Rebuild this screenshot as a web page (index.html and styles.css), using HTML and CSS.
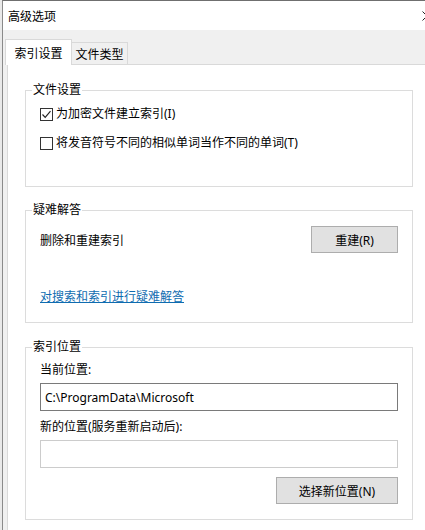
FILE: index.html
```html
<!DOCTYPE html>
<html lang="zh-CN">
<head>
    <meta charset="UTF-8">
    <meta name="viewport" content="width=device-width, initial-scale=1.0">
    <title>高级选项</title>
    <link rel="stylesheet" href="styles.css">
</head>
<body>
    <div class="window">
        <div class="titlebar">
            <span class="title">高级选项</span>
            <svg class="close" width="10" height="10" viewBox="0 0 10 10">
                <path d="M0.5 0.5 L9.5 9.5 M9.5 0.5 L0.5 9.5" stroke="#222" stroke-width="1" fill="none"/>
            </svg>
        </div>

        <div class="corpo">
            <div class="tabs">
                <div class="tab ativo">索引设置</div>
                <div class="tab">文件类型</div>
            </div>

            <div class="pagina">
                <!-- Grupo 1 -->
                <div class="grupo g1">
                    <div class="grupo-titulo">文件设置</div>
                    <label class="check c1">
                        <span class="caixa">
                            <svg width="11" height="11" viewBox="0 0 11 11">
                                <path d="M1.5 5.5 L4.2 8.3 L9.5 2.2" stroke="#222" stroke-width="1.2" fill="none"/>
                            </svg>
                        </span>
                        为加密文件建立索引(I)
                    </label>
                    <label class="check c2">
                        <span class="caixa"></span>
                        将发音符号不同的相似单词当作不同的单词(T)
                    </label>
                </div>

                <!-- Grupo 2 -->
                <div class="grupo g2">
                    <div class="grupo-titulo">疑难解答</div>
                    <div class="linha">
                        <span>删除和重建索引</span>
                        <button class="botao botao-rebuild">重建(R)</button>
                    </div>
                    <a href="#" class="link">对搜索和索引进行疑难解答</a>
                </div>

                <!-- Grupo 3 -->
                <div class="grupo g3">
                    <div class="grupo-titulo">索引位置</div>
                    <div class="rotulo r1">当前位置:</div>
                    <div class="campo">C:\ProgramData\Microsoft</div>
                    <div class="rotulo r2">新的位置(服务重新启动后):</div>
                    <div class="campo vazio"></div>
                    <div class="acoes">
                        <button class="botao botao-novo">选择新位置(N)</button>
                    </div>
                </div>
            </div>
        </div>
    </div>
</body>
</html>
```

FILE: styles.css
```css
html, body {
    margin: 0;
    padding: 0;
}

body {
    background-color: #e9e9e9;
    font-family: "Noto Sans", "Noto Sans CJK SC", sans-serif;
    font-size: 12px;
    color: #000;
}

.window {
    margin-left: 2px;
    height: 530px;
    box-sizing: border-box;
    border-left: 1px solid #8a8a8a;
    border-top: 1px solid #6f6f6f;
    background-color: #f0f0f0;
    overflow: hidden;
}

.titlebar {
    height: 29px;
    background-color: #fff;
    display: flex;
    align-items: center;
    padding-left: 5px;
    overflow: hidden;
}

.close {
    margin-left: auto;
    margin-right: -7px;
    flex-shrink: 0;
}

.corpo {
    padding-top: 9px;
}

/* abas */
.tabs {
    display: flex;
    align-items: flex-start;
    height: 25px;
    padding-left: 2px;
}

.tab {
    box-sizing: border-box;
    border: 1px solid #d9d9d9;
    border-bottom: none;
    display: flex;
    align-items: center;
    justify-content: center;
}

.tab.ativo {
    width: 67px;
    height: 26px;
    background-color: #fff;
    position: relative;
    z-index: 1;
}

.tab:not(.ativo) {
    width: 57px;
    height: 22px;
    margin-top: 3px;
    margin-left: -1px;
    background-color: #f0f0f0;
}

.pagina {
    margin-left: 4px;
    min-height: 480px;
    background-color: #fff;
    border: 1px solid #d9d9d9;
    border-right: none;
    padding: 0 17px;
    overflow: hidden;
}

/* grupos */
.grupo {
    width: 388px;
    box-sizing: border-box;
    border: 1px solid #dcdcdc;
    padding: 0 14px;
}

.grupo-titulo {
    width: fit-content;
    margin: -9px 0 0 -8px;
    padding: 0 1px;
    line-height: 16px;
    background-color: #fff;
}

.g1 {
    margin-top: 25px;
    padding-bottom: 35px;
}

.g2 {
    margin-top: 23px;
    padding-bottom: 17px;
}

.g3 {
    margin-top: 24px;
    padding-bottom: 15px;
}

.check {
    display: flex;
    align-items: center;
    gap: 3px;
    height: 16px;
    line-height: 16px;
}

.c1 {
    margin-top: 8px;
}

.c2 {
    margin-top: 13px;
}

.caixa {
    width: 13px;
    height: 13px;
    box-sizing: border-box;
    border: 1px solid #333;
    background-color: #fff;
    display: flex;
    align-items: center;
    justify-content: center;
}

.linha {
    margin-top: 8px;
    height: 27px;
    display: flex;
    align-items: center;
    justify-content: space-between;
}

.botao {
    height: 27px;
    box-sizing: border-box;
    background-color: #e1e1e1;
    border: 1px solid #adadad;
    font-family: "Noto Sans", "Noto Sans CJK SC", sans-serif;
    font-size: 12px;
    color: #000;
    padding: 0;
}

.botao-rebuild {
    width: 87px;
}

.botao-novo {
    width: 122px;
}

.link {
    display: block;
    width: fit-content;
    margin-top: 36px;
    line-height: 16px;
    color: #0f6cb0;
    text-decoration: underline;
}

.rotulo {
    line-height: 16px;
}

.r1 {
    margin-top: 7px;
}

.r2 {
    margin-top: 8px;
}

.campo {
    margin-top: 5px;
    height: 28px;
    box-sizing: border-box;
    border: 1px solid #7a7a7a;
    padding-left: 4px;
    display: flex;
    align-items: center;
}

.campo.vazio {
    border-color: #cccccc;
}

.acoes {
    margin-top: 9px;
    display: flex;
    justify-content: flex-end;
}
```
